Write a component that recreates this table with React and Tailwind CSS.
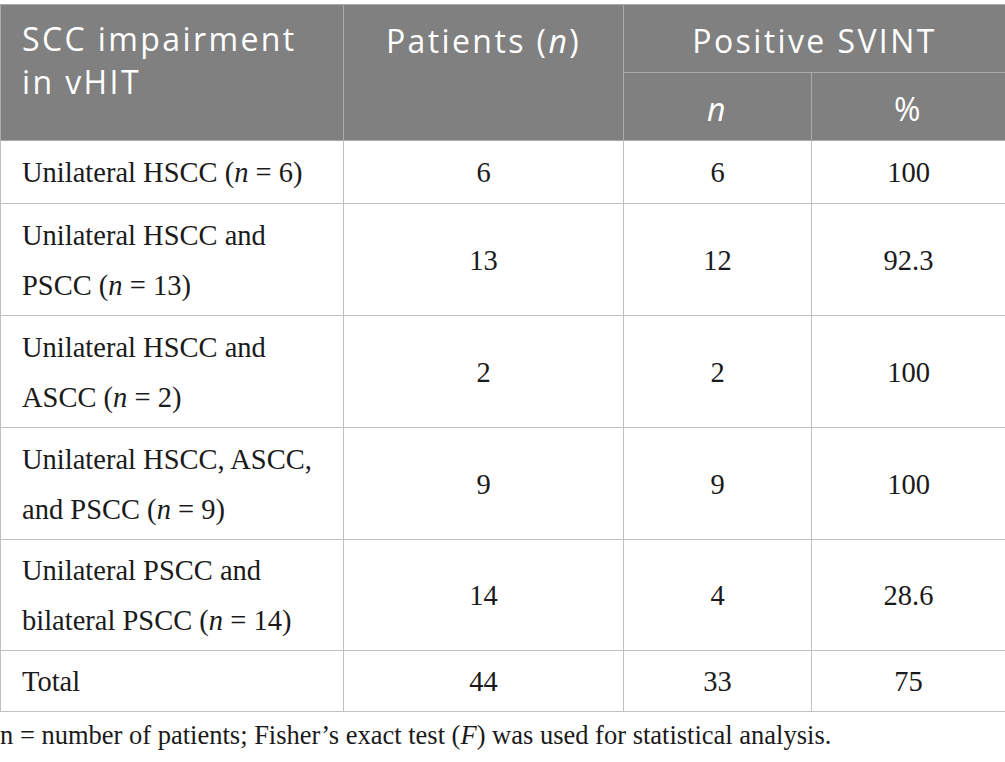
import React from "react";

const rows = [
  { label: [<>Unilateral HSCC (<i>n</i> = 6)</>], p: "6", n: "6", pct: "100", h: "h-[63px]" },
  { label: ["Unilateral HSCC and", <>PSCC (<i>n</i> = 13)</>], p: "13", n: "12", pct: "92.3", h: "h-[112px]" },
  { label: ["Unilateral HSCC and", <>ASCC (<i>n</i> = 2)</>], p: "2", n: "2", pct: "100", h: "h-[112px]" },
  { label: ["Unilateral HSCC, ASCC,", <>and PSCC (<i>n</i> = 9)</>], p: "9", n: "9", pct: "100", h: "h-[112px]" },
  { label: ["Unilateral PSCC and", <>bilateral PSCC (<i>n</i> = 14)</>], p: "14", n: "4", pct: "28.6", h: "h-[111px]" },
  { label: ["Total"], p: "44", n: "33", pct: "75", h: "h-[61px]" },
];

export default function App() {
  return (
    <div className="w-[1005px] h-[762px] bg-white pt-[4px]">
      <table className="w-[1005px] border-collapse table-fixed border border-[#c0c0c0]">
        <colgroup>
          <col className="w-[343px]" />
          <col className="w-[280px]" />
          <col className="w-[188px]" />
          <col className="w-[194px]" />
        </colgroup>
        <thead className="bg-[#808080] text-white font-['Open_Sans',sans-serif] text-[32px] leading-[43px] tracking-[2.4px]">
          <tr className="h-[68px]">
            <th rowSpan={2} className="border border-[#ababab] align-top text-left font-normal pl-[21px] pt-[12px]">
              SCC impairment
              <br />
              in vHIT
            </th>
            <th rowSpan={2} className="border border-[#ababab] align-top text-center font-normal pt-[14px]">
              Patients (<i>n</i>)
            </th>
            <th colSpan={2} className="border border-[#ababab] align-top text-center font-normal pt-[14px]">
              Positive SVINT
            </th>
          </tr>
          <tr className="h-[68px]">
            <th className="border border-[#ababab] text-center font-normal italic pt-[4px]">n</th>
            <th className="border border-[#ababab] text-center font-normal pt-[4px]">%</th>
          </tr>
        </thead>
        <tbody className="font-['Liberation_Serif',serif] text-[28.5px] leading-[50px] text-[#1a1a1a]">
          {rows.map((r, i) => (
            <tr key={i} className={r.h}>
              <td className="border border-[#c0c0c0] align-middle pl-[21px] pt-[6px] pb-[4px]">
                {r.label.map((l, j) => (
                  <div key={j}>{l}</div>
                ))}
              </td>
              <td className="border border-[#c0c0c0] align-middle text-center pt-[2px]">{r.p}</td>
              <td className="border border-[#c0c0c0] align-middle text-center pt-[2px]">{r.n}</td>
              <td className="border border-[#c0c0c0] align-middle text-center pt-[2px]">{r.pct}</td>
            </tr>
          ))}
        </tbody>
      </table>
      <p className="font-['Liberation_Serif',serif] text-[26.5px] leading-[30px] text-[#1a1a1a] mt-[8px]">
        n = number of patients; Fisher’s exact test (<i>F</i>) was used for statistical analysis.
      </p>
    </div>
  );
}
